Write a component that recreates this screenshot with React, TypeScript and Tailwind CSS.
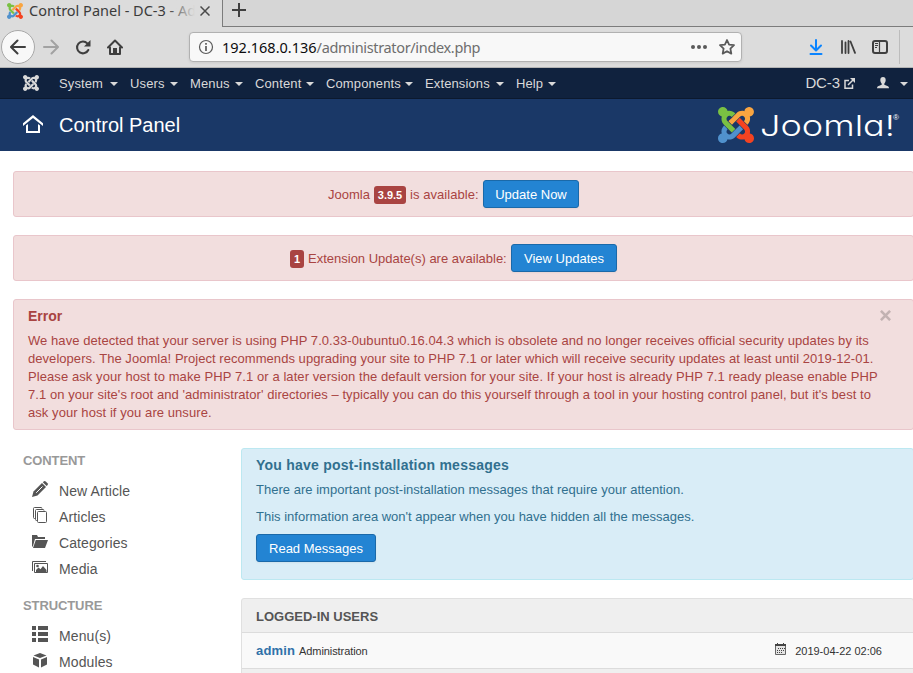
import React from "react";

const hooks = [
  "M.6 92.1C.6 58.8 27.4 32 60.4 32c30 0 54.5 21.9 59.2 50.2 32.6-7.6 67.1.6 96.5 30l-44.3 44.3c-20.5-20.5-42.6-16.3-55.4-3.5-14.3 14.3-14.3 37.9 0 52.2l99.5 99.5-44 44.3c-87.7-87.2-49.7-49.7-99.8-99.7-26.8-26.5-35-64.8-24.8-98.9C20.4 144.6.6 120.7.6 92.1z",
  "M130.1 208.5l44.3 44.3c10-10 89.7-89.7 99.7-99.8 14.3-14.3 37.6-14.3 51.9 0 12.8 12.8 17 35-3.5 55.4l44 44.3c31.2-31.2 38.5-67.6 28.9-101.2 29.2-4.1 51.9-29.2 51.9-59.5 0-33.2-26.8-60.1-59.8-60.1-30.3 0-55.4 22.5-59.5 51.6-33.8-9.9-71.7-1.5-98.3 25.1-18.3 19.1-71.1 71.5-99.6 99.9z",
  "M396.4 360.7c8.2-32.7-.9-68.5-26.3-93.9-11.8-12.2 5 4.7-99.5-99.7l-44.3 44.3 99.7 99.7c14.3 14.3 14.3 37.6 0 51.9-12.8 12.8-35 17-55.4-3.5l-44 44.3c27.6 30.2 68 38.8 102.7 28 5.5 27.4 29.7 48.1 58.9 48.1 33 0 59.8-26.8 59.8-60.1 0-30.2-22.5-55-51.6-59.1z",
  "M312.1 307.6l-44-44.3c-87 86.4-50.4 50.4-99.7 99.8-14.3 14.3-37.6 14.3-51.9 0-13.1-13.4-16.9-35.3 3.2-55.4l-44-44.3c-30.2 30.2-38 65.2-29.5 98.3-26.7 6-46.2 29.9-46.2 58.2C0 453.2 26.8 480 59.8 480c28.6 0 52.5-19.8 58.6-46.7 32.7 8.2 68.5-.6 94.2-26 32.1-32 12.2-12.4 99.5-99.7z",
];

function JoomlaMark({ className, colors }: { className: string; colors: string[] }) {
  return (
    <svg viewBox="0 32 448 448" preserveAspectRatio="none" className={className}>
      {hooks.map((d, i) => (
        <path key={i} d={d} fill={colors[i]} />
      ))}
    </svg>
  );
}

const brand = ["#7ac143", "#f9a541", "#f44321", "#5091cd"];
const mono = ["#d9d9d9", "#d9d9d9", "#d9d9d9", "#d9d9d9"];

function Caret() {
  return <div className="mt-px h-0 w-0 border-x-4 border-t-4 border-x-transparent border-t-[#d9d9d9]" />;
}

function MenuItem({ label, className }: { label: string; className: string }) {
  return (
    <div className={`flex shrink-0 items-center justify-between ${className}`}>
      <span className="pt-[2px] tracking-[0.12px]">{label}</span>
      <Caret />
    </div>
  );
}

function BrowserChrome() {
  return (
    <div className="font-['Noto_Sans',sans-serif] text-[#3b3b3b]">
      <div className="flex h-[27px] bg-[#d6d6d6]">
        <div className="flex w-[223px] shrink-0 items-start border-r border-[#7c7c7c] bg-[#dcdcdc] pl-[7px]">
          <JoomlaMark className="mt-[3px] h-4 w-4 shrink-0" colors={brand} />
          <div className="relative ml-[6px] h-[22px] w-[166px] overflow-hidden whitespace-nowrap text-[14.5px] leading-[21px]">
            Control Panel - DC-3 - Ad
            <div className="absolute inset-y-0 right-0 w-[28px] bg-linear-to-r from-[#dcdcdc00] to-[#dcdcdc]" />
          </div>
          <svg viewBox="0 0 10 10" className="mt-[6px] ml-[5px] h-[10px] w-[10px] shrink-0" stroke="#4a4a4a" strokeWidth="1.5">
            <path d="M.5.5l9 9M9.500.5l-9 9" />
          </svg>
        </div>
        <div className="flex flex-1 border-b border-[#7c7c7c] pl-[9px]">
          <svg viewBox="0 0 14 14" className="mt-[3px] h-[14px] w-[14px]" stroke="#3f3f3f" strokeWidth="2">
            <path d="M0 7h14M7 0v14" />
          </svg>
        </div>
      </div>
      <div className="flex h-[41px] items-center border-b border-[#b4b4b4] bg-[#dcdcdc]">
        <div className="ml-[1px] flex h-[34px] w-[34px] shrink-0 items-center justify-center rounded-full border border-[#a8a8a8] bg-[#f8f8f8]">
          <svg viewBox="0 0 16 16" className="h-4 w-4" fill="none" stroke="#3f3f3f" strokeWidth="2" strokeLinecap="round" strokeLinejoin="round">
            <path d="M15 8H1.500M7.500 1.500L1 8l6.500 6.500" />
          </svg>
        </div>
        <svg viewBox="0 0 16 16" className="ml-[8px] h-4 w-4 shrink-0" fill="none" stroke="#a2a2a2" strokeWidth="2" strokeLinecap="round" strokeLinejoin="round">
          <path d="M1 8h13.500M8.500 1.500L15 8l-6.500 6.500" />
        </svg>
        <svg viewBox="0 0 16 16" className="ml-[16px] h-4 w-4 shrink-0">
          <path d="M12.300 4.400A5.900 5.900 0 1 0 13.300 11" fill="none" stroke="#3f3f3f" strokeWidth="2.100" strokeLinecap="round" />
          <path d="M15.500 1v6.500H9z" fill="#3f3f3f" />
        </svg>
        <svg viewBox="0 0 16 16" className="ml-[16px] h-4 w-4 shrink-0" fill="none" stroke="#3f3f3f" strokeWidth="2" strokeLinecap="round" strokeLinejoin="round">
          <path d="M1 8.500L8 1.500l7 7M3 8.500V15h10V8.500" />
          <path d="M7 14.500V10h2v4.500" strokeWidth="2" strokeLinecap="butt" strokeLinejoin="miter" />
        </svg>
        <div className="ml-[66px] flex h-[30px] w-[553px] shrink-0 items-center rounded-[4px] border border-[#b1b1b1] bg-[#f8f8f8] shadow-[0_1px_3px_rgba(0,0,0,0.08)]">
          <svg viewBox="0 0 16 16" className="ml-[8px] h-[16px] w-[16px] shrink-0" fill="none" stroke="#5a5a5a">
            <circle cx="8" cy="8" r="6.500" strokeWidth="1.200" />
            <path d="M8 4v1.800M8 7v5" strokeWidth="1.700" />
          </svg>
          <div className="ml-[8px] whitespace-nowrap text-[14.500px] leading-[20px] tracking-[-0.34px] text-[#6e6e6e]">
            <span className="tracking-normal text-[#0c0c0d]">192.168.0.136</span>/administrator/index.php
          </div>
          <svg viewBox="0 0 16 4" className="ml-auto h-1 w-4" fill="#5a5a5a">
            <circle cx="2" cy="2" r="2" />
            <circle cx="8" cy="2" r="2" />
            <circle cx="14" cy="2" r="2" />
          </svg>
          <svg viewBox="0 0 16 16" className="ml-[12px] mr-[6px] h-4 w-4" fill="none" stroke="#5a5a5a" strokeWidth="1.800" strokeLinejoin="round">
            <path d="M8 1l2.100 4.600 4.900.6-3.600 3.400.9 5L8 12.200 3.700 14.600l.9-5L1 6.200l4.900-.6z" />
          </svg>
        </div>
        <svg viewBox="0 0 14 16" className="ml-[67px] h-4 w-[14px] shrink-0" fill="none" stroke="#0a84ff" strokeWidth="2" strokeLinecap="round" strokeLinejoin="round">
          <path d="M7 1v9.500M2 6.500l5 5 5-5M1.500 15h11" />
        </svg>
        <svg viewBox="0 0 16 16" className="ml-[17px] h-4 w-4 shrink-0" fill="none" stroke="#3f3f3f" strokeWidth="2" strokeLinecap="round">
          <path d="M2 2v12M5.500 3.500V14M8.500 2v12M10.500 2.500l4.500 11.300" strokeWidth="1.800" />
        </svg>
        <svg viewBox="0 0 16 16" className="ml-[16px] h-4 w-4 shrink-0" fill="none" stroke="#3f3f3f">
          <rect x="1" y="2" width="14" height="12" rx="2" strokeWidth="2" />
          <path d="M7.500 2v12" strokeWidth="1.200" />
          <path d="M3 4.500h3M3 6.500h3M3 8.500h2" strokeWidth="1" />
        </svg>
        <div className="ml-[11px] h-[34px] w-px bg-[#bcbcbc]" />
      </div>
    </div>
  );
}

function Button({ children, className }: { children: React.ReactNode; className: string }) {
  return (
    <button className={`flex h-7 shrink-0 items-center justify-center whitespace-nowrap rounded-[3px] border border-[#1a69a9] bg-[#2384d3] pt-px text-[13px] leading-[18px] text-white shadow-[0_1px_2px_rgba(0,0,0,0.05)] ${className}`}>
      {children}
    </button>
  );
}

function Badge({ children, className }: { children: React.ReactNode; className: string }) {
  return (
    <span className={`mt-[2px] flex h-[18px] items-center justify-center rounded-[3px] bg-[#a94442] text-[11px] leading-[14px] font-bold text-white ${className}`}>
      {children}
    </span>
  );
}

const icons: Record<string, React.ReactNode> = {
  pencil: (
    <>
      <path d="M0 16l1.500-5.500L10 2l4 4-8.500 8.500z" fill="#555" />
      <path d="M4.200 11.800l6.300-6.300" stroke="#fff" strokeWidth="1" />
      <path d="M10.800 1.300L12 .2Q13 -.2 14 .7L15.500 2.200Q16.300 3.200 15.600 4L14.600 5z" fill="#555" />
    </>
  ),
  copy: (
    <g fill="#fff" stroke="#555" strokeWidth="1">
      <path d="M3 11.500H2.500Q1.500 11.500 1.500 10.500V1.500Q1.500.5 2.500.5H9Q10 .5 10 1.500M5 13.500H4.500Q3.500 13.500 3.500 12.500V3.500Q3.500 2.500 4.500 2.500H11Q12 2.500 12 3.500" fill="none" />
      <rect x="5.500" y="4.500" width="9" height="11" rx="1" />
    </g>
  ),
  folder: <path d="M0 14V2h5l1 2h7v2H3L1 13zM1 15L3.800 7H16l-3 8z" fill="#555" />,
  media: (
    <>
      <path d="M.5 12V2.500H14M2.500 4.500h13v9h-13z" fill="none" stroke="#555" />
      <path d="M4 13v-2l2.500-2.500 2 1.800L11 7l3.500 4v2z" fill="#555" />
      <circle cx="5.500" cy="7" r="1.300" fill="#555" />
    </>
  ),
  list: <path d="M0 0h4v4H0zM6 0h10v4H6zM0 6h4v4H0zM6 6h10v4H6zM0 12h4v4H0zM6 12h10v4H6z" fill="#555" />,
  cube: <path d="M8 1l6.500 2.500L8 6 1.500 3.500zM1 5l6 2.500V15.500l-6-3zM15 5L9 7.500V15.500l6-3z" fill="#555" />,
};

function SideItem({ icon, label }: { icon: string; label: string }) {
  return (
    <li className="flex h-[26px] items-start pl-[9px]">
      <svg viewBox="0 0 16 16" className="mt-[3px] h-4 w-4 shrink-0 overflow-visible">
        {icons[icon]}
      </svg>
      <span className="ml-[11px] pt-[4px] text-[14px] leading-[18px] tracking-[0.1px] whitespace-nowrap text-[#555]">{label}</span>
    </li>
  );
}

function ErrorText() {
  return (
    <div className="mt-[7px] whitespace-nowrap">
      <p className="tracking-[0.063px]">We have detected that your server is using PHP 7.0.33-0ubuntu0.16.04.3 which is obsolete and no longer receives official security updates by its</p>
      <p className="tracking-[0.048px]">developers. The Joomla! Project recommends upgrading your site to PHP 7.1 or later which will receive security updates at least until 2019-12-01.</p>
      <p className="tracking-[0.082px]">Please ask your host to make PHP 7.1 or a later version the default version for your site. If your host is already PHP 7.1 ready please enable PHP</p>
      <p className="tracking-[0.06px]">7.1 on your site's root and 'administrator' directories – typically you can do this yourself through a tool in your hosting control panel, but it's best to</p>
      <p className="tracking-[0.07px]">ask your host if you are unsure.</p>
    </div>
  );
}

export default function App() {
  return (
    <div className="h-[673px] w-[913px] overflow-hidden bg-white font-['Liberation_Sans',Arial,sans-serif] text-[13px] leading-[18px]">
      <BrowserChrome />
      <nav className="flex h-[31px] items-center border-b border-[#0c192e] bg-[#10223e] text-[#d9d9d9]">
        <JoomlaMark className="ml-[23px] mr-[20px] h-4 w-4 shrink-0" colors={mono} />
        <MenuItem label="System" className="w-[71px] pr-[12px]" />
        <MenuItem label="Users" className="w-[60px] pr-[12px]" />
        <MenuItem label="Menus" className="w-[65px] pr-[12px]" />
        <MenuItem label="Content" className="w-[71px] pr-[12px]" />
        <MenuItem label="Components" className="w-[99px] pr-[12px]" />
        <MenuItem label="Extensions" className="w-[91px] pr-[12px]" />
        <MenuItem label="Help" className="w-[40px]" />
        <div className="ml-auto flex items-center">
          <span className="text-[15px] tracking-[-0.1px]">DC-3</span>
          <svg viewBox="0 0 11 11" className="ml-[4px] h-[11px] w-[11px]" fill="none" stroke="#d9d9d9" strokeWidth="1.500">
            <path d="M5 2.500H1v7.700h7.500V6.500M4 7l5.500-5.500" />
            <path d="M6 0h5v5z" fill="#d9d9d9" stroke="none" />
          </svg>
          <svg viewBox="0 0 12 12" className="ml-[22px] h-3 w-3" fill="#d9d9d9">
            <path d="M6 0c1.800 0 2.700 1.200 2.700 3S7.800 6 7.300 6.700v1.100L11 9.300q1 .5 1 2H0q0-1.500 1-2l3.700-1.500V6.700C4.200 6 3.300 4.800 3.300 3S4.200 0 6 0z" />
          </svg>
          <div className="mr-[5px] ml-[11px]">
            <Caret />
          </div>
        </div>
      </nav>
      <header className="flex h-[52px] items-center bg-[#1a3867] text-white">
        <svg viewBox="0 0 20 18" className="mb-[3px] ml-[23px] h-[18px] w-5 shrink-0" fill="#fff">
          <path d="M10 0L20 8.200V11L10 3 0 11V8.200z" />
          <path d="M3 10.500l2-1.500v7h10V9l2 1.500V18H3z" />
        </svg>
        <h1 className="ml-[16px] text-[20px] leading-[36px] whitespace-nowrap">Control Panel</h1>
        <div className="ml-auto flex items-center">
          <JoomlaMark className="h-9 w-9" colors={brand} />
          <svg viewBox="0 0 153 40" className="ml-[6px] h-10 w-[153px]" fill="#fff">
            <text x="0" y="31" fontFamily="Inter" fontSize="29" fontWeight="300" textLength="135" lengthAdjust="spacingAndGlyphs" className="[font-feature-settings:'cv11'_1]">
              Joomla!
            </text>
            <text x="133" y="15" fontFamily="Liberation Sans" fontSize="8">®</text>
          </svg>
        </div>
      </header>
      <main className="w-[914px] pt-5 pl-[13px]">
        <div className="mb-[18px] flex h-[46px] items-center rounded-[3px] border border-[#e9c6cb] bg-[#f2dede] pl-[314px] text-[#a94442]">
          <span className="w-[46px] pt-[2px]">Joomla</span>
          <Badge className="w-8">3.9.5</Badge>
          <span className="ml-[4px] w-[73px] pt-[2px] tracking-[0.05px] whitespace-nowrap">is available:</span>
          <Button className="w-24">Update Now</Button>
        </div>
        <div className="mb-[18px] flex h-[46px] items-center rounded-[3px] border border-[#e9c6cb] bg-[#f2dede] pl-[276px] text-[#a94442]">
          <Badge className="w-[14px]">1</Badge>
          <span className="ml-[4px] w-[203px] pt-[2px] whitespace-nowrap">Extension Update(s) are available:</span>
          <Button className="w-[106px]">View Updates</Button>
        </div>
        <div className="mb-[18px] h-[131px] rounded-[3px] border border-[#e9c6cb] bg-[#f2dede] px-[14px] pt-[7px] text-[#a94442]">
          <div className="flex items-center justify-between">
            <h4 className="text-[14px] font-bold">Error</h4>
            <svg viewBox="0 0 10 10" className="mr-[8px] mb-[2px] h-[11px] w-[11px]" stroke="#c2b2b2" strokeWidth="2.400">
              <path d="M.8.8l8.400 8.400M9.200.8L.8 9.200" />
            </svg>
          </div>
          <ErrorText />
        </div>
        <div className="flex">
          <aside className="w-[228px] shrink-0 pl-[10px]">
            <h2 className="mt-[4px] text-[13px] font-bold tracking-[-0.1px] text-[#999]">CONTENT</h2>
            <ul className="mt-[8px]">
              <SideItem icon="pencil" label="New Article" />
              <SideItem icon="copy" label="Articles" />
              <SideItem icon="folder" label="Categories" />
              <SideItem icon="media" label="Media" />
            </ul>
            <h2 className="mt-[15px] text-[13px] font-bold tracking-[-0.1px] text-[#999]">STRUCTURE</h2>
            <ul className="mt-[8px]">
              <SideItem icon="list" label="Menu(s)" />
              <SideItem icon="cube" label="Modules" />
            </ul>
          </aside>
          <section className="flex-1">
            <div className="h-[132px] rounded-[3px] border border-[#bce8f1] bg-[#d9edf7] px-[14px] pt-[7px] text-[#31708f]">
              <h4 className="text-[14px] font-bold tracking-[0.235px]">You have post-installation messages</h4>
              <p className="mt-[7px] tracking-[0.02px]">There are important post-installation messages that require your attention.</p>
              <p className="mt-[9px] mb-[8px]">This information area won't appear when you have hidden all the messages.</p>
              <Button className="w-[120px]">Read Messages</Button>
            </div>
            <div className="mt-[18px] h-[90px] rounded-[3px] border border-[#e0e0e0] bg-[#efefef]">
              <h2 className="flex h-[34px] items-center border-b border-[#dcdcdc] px-[14px] pt-[3px] text-[13px] font-bold text-[#555]">LOGGED-IN USERS</h2>
              <div className="flex h-[36px] items-center border-b border-[#dcdcdc] bg-[#f9f9f9] px-[14px]">
                <strong className="tracking-[0.15px] text-[#3071a9]">admin</strong>
                <span className="ml-[4px] pt-px text-[11px] tracking-[-0.08px] text-[#333]">Administration</span>
                <svg viewBox="0 0 11 12" className="mt-[10px] mr-[9px] ml-auto h-3 w-[11px] self-start">
                  <path d="M.5 1.500h10v10H.5z" fill="#e4e4e4" stroke="#666" />
                  <path d="M0 1h2V0h1v1h5V0h1v1h2v2H0z" fill="#444" />
                  <path d="M3 5.500h7M2 7.500h8M2 9.500h6" stroke="#444" strokeDasharray="1 1" />
                </svg>
                <span className="mr-[17px] text-[11px] text-[#333]">2019-04-22 02:06</span>
              </div>
            </div>
          </section>
        </div>
      </main>
    </div>
  );
}
